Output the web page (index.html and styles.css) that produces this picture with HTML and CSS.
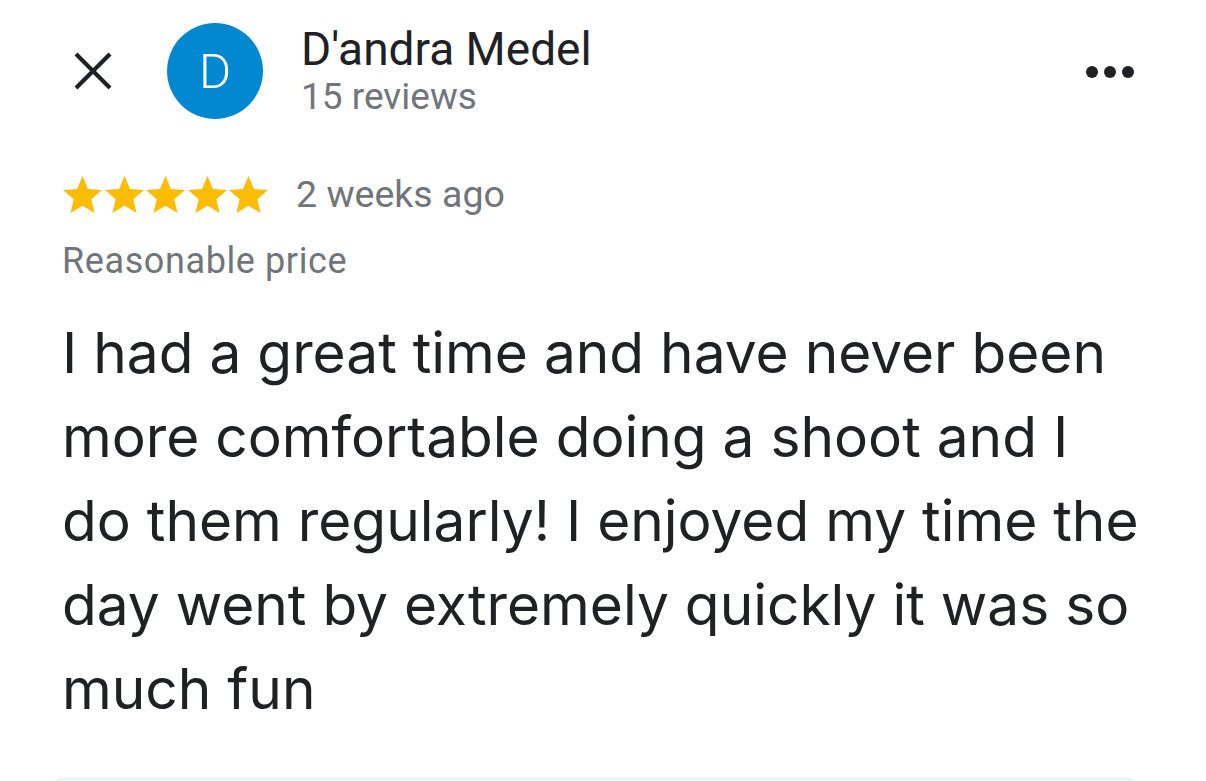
FILE: index.html
```html
<!DOCTYPE html>
<html>
<head>
<meta charset="utf-8">
<link rel="stylesheet" href="styles.css">
</head>
<body>
<div class="page">
  <header class="header">
    <svg class="close" viewBox="0 0 40 40" width="40" height="40"><path d="M3 3L37 37M37 3L3 37" stroke="#202124" stroke-width="4.2" fill="none"/></svg>
    <div class="avatar">D</div>
    <div class="who">
      <div class="name">D'andra Medel</div>
      <div class="count">15 reviews</div>
    </div>
    <div class="more"><span></span><span></span><span></span></div>
  </header>
  <div class="meta">
    <div class="stars">
      <svg viewBox="2 2 20 19" width="39" height="37"><path d="M12 17.27L18.18 21l-1.64-7.03L22 9.24l-7.19-.61L12 2 9.19 8.63 2 9.24l5.46 4.73L5.82 21z"/></svg>
      <svg viewBox="2 2 20 19" width="39" height="37"><path d="M12 17.27L18.18 21l-1.64-7.03L22 9.24l-7.19-.61L12 2 9.19 8.63 2 9.24l5.46 4.73L5.82 21z"/></svg>
      <svg viewBox="2 2 20 19" width="39" height="37"><path d="M12 17.27L18.18 21l-1.64-7.03L22 9.24l-7.19-.61L12 2 9.19 8.63 2 9.24l5.46 4.73L5.82 21z"/></svg>
      <svg viewBox="2 2 20 19" width="39" height="37"><path d="M12 17.27L18.18 21l-1.64-7.03L22 9.24l-7.19-.61L12 2 9.19 8.63 2 9.24l5.46 4.73L5.82 21z"/></svg>
      <svg viewBox="2 2 20 19" width="39" height="37"><path d="M12 17.27L18.18 21l-1.64-7.03L22 9.24l-7.19-.61L12 2 9.19 8.63 2 9.24l5.46 4.73L5.82 21z"/></svg>
    </div>
    <span class="when">2 weeks ago</span>
  </div>
  <div class="tag">Reasonable price</div>
  <p class="body">I had a great time and have never been<br>more comfortable doing a shoot and I<br>do them regularly! I enjoyed my time the<br>day went by extremely quickly it was so<br>much fun</p>
  <div class="next"></div>
</div>
</body>
</html>
```

FILE: styles.css
```css
html, body {
  margin: 0;
  padding: 0;
  background: #fff;
}
.page {
  width: 1206px;
  height: 781px;
  overflow: hidden;
  font-family: Roboto, "Liberation Sans", sans-serif;
  color: #202124;
}
.header {
  display: flex;
  align-items: center;
  padding: 23px 72px 0 73px;
}
.close {
  flex: none;
  display: block;
}
.avatar {
  flex: none;
  width: 96px;
  height: 96px;
  margin-left: 54px;
  border-radius: 50%;
  background: #0288d1;
  color: #fff;
  font-size: 49px;
  font-weight: 300;
  display: flex;
  align-items: center;
  justify-content: center;
}
.who {
  margin-left: 38px;
  flex: 1;
  align-self: flex-start;
  margin-top: 0;
}
.name {
  font-size: 46px;
  line-height: 52px;
  color: #202124;
}
.count {
  font-size: 37px;
  line-height: 44px;
  color: #70757a;
}
.more {
  display: flex;
  gap: 6px;
  align-self: flex-start;
  margin-top: 43px;
}
.more span {
  width: 12px;
  height: 12px;
  border-radius: 50%;
  background: #202124;
}
.meta {
  display: flex;
  align-items: center;
  padding-left: 63px;
  margin-top: 53px;
}
.stars {
  display: flex;
  gap: 2.5px;
}
.stars svg {
  display: block;
  fill: #fbbc04;
}
.when {
  margin-left: 28px;
  font-size: 37.5px;
  color: #70757a;
}
.tag {
  padding-left: 62px;
  margin-top: 24px;
  font-size: 36px;
  letter-spacing: 0.6px;
  color: #70757a;
}
.body {
  margin: 29px 0 0 62px;
  font-family: Inter, "Open Sans", sans-serif;
  font-size: 56.8px;
  line-height: 84px;
  color: #202124;
}
.next {
  margin: 46px 64px 0 49px;
  height: 40px;
  border-radius: 16px;
  background: #f1f3f4;
}
```
